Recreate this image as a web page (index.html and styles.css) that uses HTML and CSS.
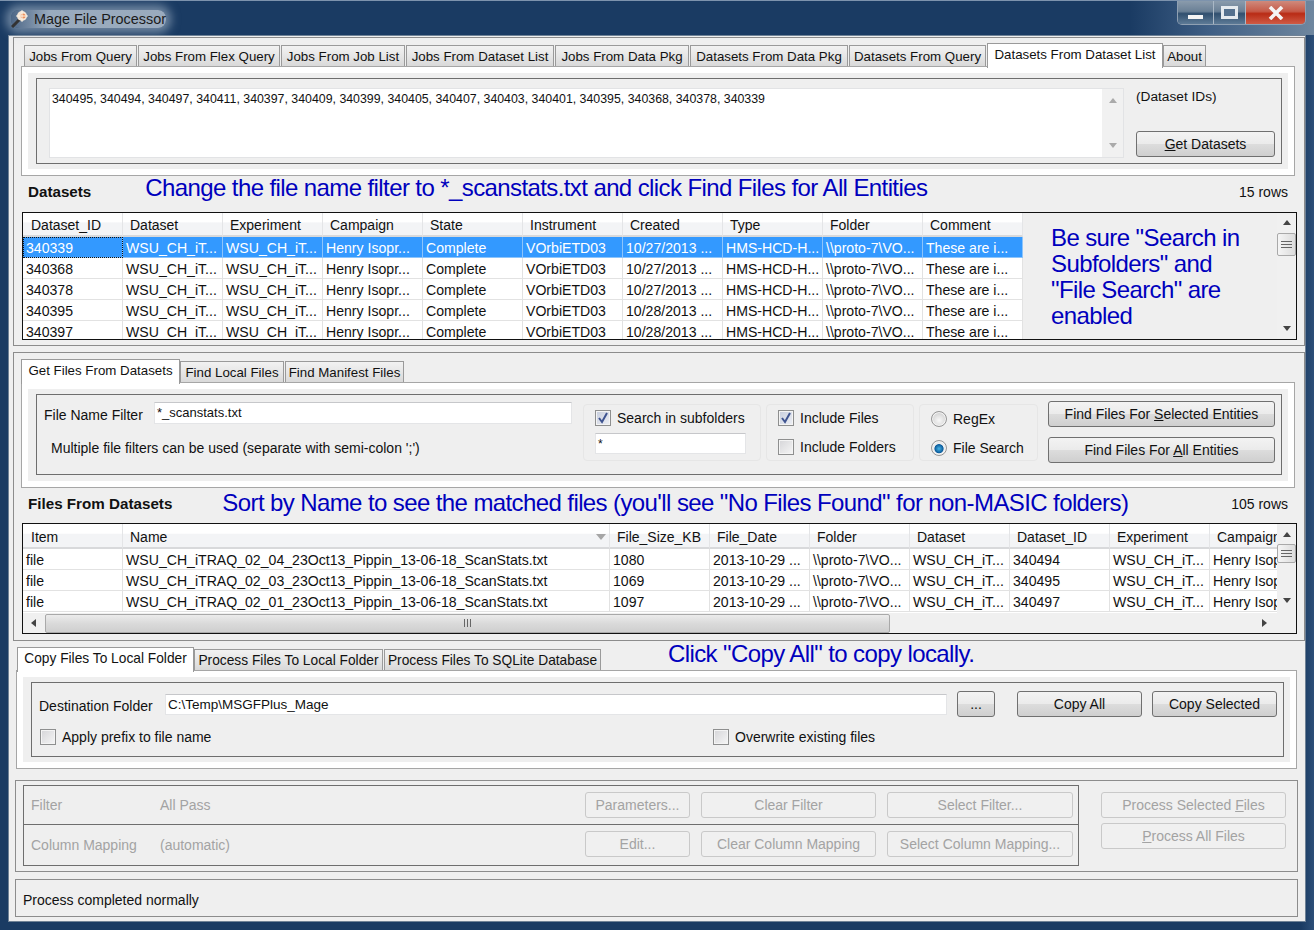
FILE: index.html
```html
<!DOCTYPE html>
<html lang="en">
<head>
    <meta charset="UTF-8">
    <title>Mage File Processor</title>
    <link rel="stylesheet" href="styles.css">
</head>
<body>
<div class="window">
    <div class="titlebar">
        <div class="title-glow">
            <svg class="app-icon" width="18" height="18" viewBox="0 0 18 18">
                <path d="M1 17 L9 9" stroke="#333" stroke-width="3"/>
                <circle cx="11" cy="6" r="5" fill="#f6e6d6"/>
                <circle cx="12" cy="6" r="2.5" fill="#ee8f5a"/>
                <path d="M11 0 V12 M5 6 H17" stroke="#fbf3e6" stroke-width="1"/>
            </svg>
            <span class="title-text">Mage File Processor</span>
        </div>
        <div class="window-controls">
            <div class="ctl ctl-min"><span class="min-bar"></span></div>
            <div class="ctl ctl-max"><span class="max-box"></span></div>
            <div class="ctl ctl-close">
                <svg width="16" height="14" viewBox="0 0 16 14"><path d="M2 1 L14 13 M14 1 L2 13" stroke="#f4f4f4" stroke-width="3.6"/></svg>
            </div>
        </div>
    </div>

    <div class="client">
        <!-- upper panel: dataset query -->
        <section class="panel panel-datasets">
            <div class="tabs tabs-query">
                <div class="tab">Jobs From Query</div>
                <div class="tab">Jobs From Flex Query</div>
                <div class="tab">Jobs From Job List</div>
                <div class="tab">Jobs From Dataset List</div>
                <div class="tab">Jobs From Data Pkg</div>
                <div class="tab">Datasets From Data Pkg</div>
                <div class="tab">Datasets From Query</div>
                <div class="tab active">Datasets From Dataset List</div>
                <div class="tab">About</div>
            </div>
            <div class="tab-page page-query">
                <div class="group group-query">
                    <div class="textbox">
                        <div class="textbox-text">340495, 340494, 340497, 340411, 340397, 340409, 340399, 340405, 340407, 340403, 340401, 340395, 340368, 340378, 340339</div>
                        <div class="textbox-scroll"><span class="arrow up pale"></span><span class="arrow down pale"></span></div>
                    </div>
                    <div class="query-side">
                        <span class="ids-label">(Dataset IDs)</span>
                        <button class="btn btn-get"><u>G</u>et Datasets</button>
                    </div>
                </div>
            </div>
            <div class="heading-row">
                <span class="heading">Datasets</span>
                <span class="note note-datasets">Change the file name filter to *_scanstats.txt and click Find Files for All Entities</span>
                <span class="count">15 rows</span>
            </div>
            <div class="grid-frame frame-datasets">
                <div class="grid-clip clip-datasets">
                    <table class="grid">
                        <thead>
                            <tr><th>Dataset_ID</th><th>Dataset</th><th>Experiment</th><th>Campaign</th><th>State</th><th>Instrument</th><th>Created</th><th>Type</th><th>Folder</th><th>Comment</th></tr>
                        </thead>
                        <tbody>
                            <tr class="selected"><td class="focused">340339</td><td>WSU_CH_iT...</td><td>WSU_CH_iT...</td><td>Henry Isopr...</td><td>Complete</td><td>VOrbiETD03</td><td>10/27/2013 ...</td><td>HMS-HCD-H...</td><td>\\proto-7\VO...</td><td>These are i...</td></tr>
                            <tr><td>340368</td><td>WSU_CH_iT...</td><td>WSU_CH_iT...</td><td>Henry Isopr...</td><td>Complete</td><td>VOrbiETD03</td><td>10/27/2013 ...</td><td>HMS-HCD-H...</td><td>\\proto-7\VO...</td><td>These are i...</td></tr>
                            <tr><td>340378</td><td>WSU_CH_iT...</td><td>WSU_CH_iT...</td><td>Henry Isopr...</td><td>Complete</td><td>VOrbiETD03</td><td>10/27/2013 ...</td><td>HMS-HCD-H...</td><td>\\proto-7\VO...</td><td>These are i...</td></tr>
                            <tr><td>340395</td><td>WSU_CH_iT...</td><td>WSU_CH_iT...</td><td>Henry Isopr...</td><td>Complete</td><td>VOrbiETD03</td><td>10/28/2013 ...</td><td>HMS-HCD-H...</td><td>\\proto-7\VO...</td><td>These are i...</td></tr>
                            <tr><td>340397</td><td>WSU_CH_iT...</td><td>WSU_CH_iT...</td><td>Henry Isopr...</td><td>Complete</td><td>VOrbiETD03</td><td>10/28/2013 ...</td><td>HMS-HCD-H...</td><td>\\proto-7\VO...</td><td>These are i...</td></tr>
                        </tbody>
                    </table>
                </div>
                <div class="side-note">Be sure "Search in Subfolders" and "File Search" are enabled</div>
                <div class="vscroll vscroll-datasets">
                    <span class="arrow up"></span>
                    <span class="thumb"><i></i><i></i><i></i></span>
                    <span class="arrow down"></span>
                </div>
            </div>
        </section>

        <!-- middle panel: find files -->
        <section class="panel panel-files">
            <div class="tabs tabs-find">
                <div class="tab active">Get Files From Datasets</div>
                <div class="tab">Find Local Files</div>
                <div class="tab">Find Manifest Files</div>
            </div>
            <div class="tab-page page-find">
                <div class="group group-find">
                    <div class="filter-col">
                        <div class="filter-row">
                            <label class="filter-label">File Name Filter</label>
                            <div class="input input-filter">*_scanstats.txt</div>
                        </div>
                        <div class="filter-hint">Multiple file filters can be used (separate with semi-colon ';')</div>
                    </div>
                    <div class="opt-box opt-sub">
                        <div class="check-row"><span class="check on"><svg width="12" height="12" viewBox="0 0 12 12"><path d="M2 6 L5 10 L10 1" fill="none" stroke="#3f5490" stroke-width="2"/></svg></span>Search in subfolders</div>
                        <div class="input input-sub">*</div>
                    </div>
                    <div class="opt-box opt-include">
                        <div class="check-row"><span class="check on"><svg width="12" height="12" viewBox="0 0 12 12"><path d="M2 6 L5 10 L10 1" fill="none" stroke="#3f5490" stroke-width="2"/></svg></span>Include Files</div>
                        <div class="check-row"><span class="check"></span>Include Folders</div>
                    </div>
                    <div class="opt-box opt-mode">
                        <div class="check-row"><span class="radio"></span>RegEx</div>
                        <div class="check-row"><span class="radio on"></span>File Search</div>
                    </div>
                    <div class="find-buttons">
                        <button class="btn btn-find">Find Files For <u>S</u>elected Entities</button>
                        <button class="btn btn-find">Find Files For <u>A</u>ll Entities</button>
                    </div>
                </div>
            </div>
            <div class="heading-row heading-files">
                <span class="heading">Files From Datasets</span>
                <span class="note note-files">Sort by Name to see the matched files (you'll see "No Files Found" for non-MASIC folders)</span>
                <span class="count">105 rows</span>
            </div>
            <div class="grid-frame frame-files">
                <div class="files-top">
                    <div class="grid-clip clip-files">
                        <table class="grid grid-files">
                            <colgroup><col class="col-std"><col class="col-name"><col class="col-std"><col class="col-std"><col class="col-std"><col class="col-std"><col class="col-std"><col class="col-std"><col class="col-std"></colgroup>
                            <thead>
                                <tr><th>Item</th><th class="sorted">Name<span class="sort-mark"></span></th><th>File_Size_KB</th><th>File_Date</th><th>Folder</th><th>Dataset</th><th>Dataset_ID</th><th>Experiment</th><th>Campaign</th></tr>
                            </thead>
                            <tbody>
                                <tr><td>file</td><td>WSU_CH_iTRAQ_02_04_23Oct13_Pippin_13-06-18_ScanStats.txt</td><td>1080</td><td>2013-10-29 ...</td><td>\\proto-7\VO...</td><td>WSU_CH_iT...</td><td>340494</td><td>WSU_CH_iT...</td><td>Henry Isopr...</td></tr>
                                <tr><td>file</td><td>WSU_CH_iTRAQ_02_03_23Oct13_Pippin_13-06-18_ScanStats.txt</td><td>1069</td><td>2013-10-29 ...</td><td>\\proto-7\VO...</td><td>WSU_CH_iT...</td><td>340495</td><td>WSU_CH_iT...</td><td>Henry Isopr...</td></tr>
                                <tr><td>file</td><td>WSU_CH_iTRAQ_02_01_23Oct13_Pippin_13-06-18_ScanStats.txt</td><td>1097</td><td>2013-10-29 ...</td><td>\\proto-7\VO...</td><td>WSU_CH_iT...</td><td>340497</td><td>WSU_CH_iT...</td><td>Henry Isopr...</td></tr>
                            </tbody>
                        </table>
                    </div>
                    <div class="vscroll vscroll-files">
                        <span class="arrow up"></span>
                        <span class="thumb"><i></i><i></i><i></i></span>
                        <span class="arrow down"></span>
                    </div>
                </div>
                <div class="hscroll">
                    <span class="arrow left"></span>
                    <span class="hthumb"><i></i><i></i><i></i></span>
                    <span class="arrow right"></span>
                </div>
            </div>
        </section>

        <!-- copy / process tabs -->
        <section class="copy-section">
            <div class="tabs tabs-copy">
                <div class="tab active">Copy Files To Local Folder</div>
                <div class="tab">Process Files To Local Folder</div>
                <div class="tab">Process Files To SQLite Database</div>
                <div class="note note-copy">Click "Copy All" to copy locally.</div>
            </div>
            <div class="tab-page page-copy">
                <div class="group group-copy">
                    <div class="dest-row">
                        <label class="dest-label">Destination Folder</label>
                        <div class="input input-dest">C:\Temp\MSGFPlus_Mage</div>
                        <button class="btn btn-browse">...</button>
                        <button class="btn btn-copy">Copy All</button>
                        <button class="btn btn-copy">Copy Selected</button>
                    </div>
                    <div class="copy-opts">
                        <div class="check-row check-prefix"><span class="check"></span>Apply prefix to file name</div>
                        <div class="check-row"><span class="check"></span>Overwrite existing files</div>
                    </div>
                </div>
            </div>
        </section>

        <!-- disabled pipeline controls -->
        <section class="process-box">
            <div class="filter-table">
                <div class="filter-line">
                    <span class="dim-name">Filter</span>
                    <span class="dim-value">All Pass</span>
                    <button class="btn off btn-small">Parameters...</button>
                    <button class="btn off btn-mid">Clear Filter</button>
                    <button class="btn off btn-wide">Select Filter...</button>
                </div>
                <div class="filter-line line-mapping">
                    <span class="dim-name">Column Mapping</span>
                    <span class="dim-value">(automatic)</span>
                    <button class="btn off btn-small">Edit...</button>
                    <button class="btn off btn-mid">Clear Column Mapping</button>
                    <button class="btn off btn-wide">Select Column Mapping...</button>
                </div>
            </div>
            <div class="process-buttons">
                <button class="btn off btn-process">Process Selected <u>F</u>iles</button>
                <button class="btn off btn-process"><u>P</u>rocess All Files</button>
            </div>
        </section>

        <div class="status-box">Process completed normally</div>
    </div>
</div>
</body>
</html>
```

FILE: styles.css
```css
* {
    box-sizing: border-box;
}

body {
    margin: 0;
    font-family: "Liberation Sans", Arial, sans-serif;
    font-size: 14px;
    color: #111;
    background-color: #1a3b63;
}

.window {
    width: 1314px;
    height: 930px;
    overflow: hidden;
    background: linear-gradient(90deg, #1a3b63 99%, #2d4f78);
    border-top: 1px solid #7d93ad;
}

/* title bar */
.titlebar {
    display: flex;
    align-items: center;
    height: 34px;
    padding-left: 11px;
    background: linear-gradient(90deg, #1a3b63 86%, #3f5f85 92%, #6f879f 100%);
}

.title-glow {
    display: flex;
    align-items: center;
    gap: 5px;
    margin-top: 2px;
    background: linear-gradient(90deg, rgba(120, 140, 165, 0.55), rgba(196, 208, 220, 0.75) 25%);
    box-shadow: 0 0 10px 5px rgba(170, 186, 204, 0.6);
    border-radius: 8px;
}

.app-icon {
    flex: none;
}

.title-text {
    font-size: 14.4px;
    color: #1a1a1a;
    line-height: 16px;
}

.window-controls {
    display: flex;
    align-self: flex-start;
    margin-left: auto;
    margin-right: 8px;
    height: 24px;
    border: 1px solid #8fa0b2;
    border-top: none;
    border-radius: 0 0 5px 5px;
    overflow: hidden;
}

.ctl {
    display: flex;
    align-items: center;
    justify-content: center;
    background: linear-gradient(#8a9bac, #6a8096 45%, #31506f 55%, #5d7a96);
    border-right: 1px solid #aab8c6;
}

.ctl-min {
    width: 36px;
}

.ctl-max {
    width: 32px;
}

.ctl-close {
    width: 59px;
    border-right: none;
    background: linear-gradient(#cf8a7c, #c65a48 45%, #b92c16 55%, #cf5a44);
}

.min-bar {
    width: 15px;
    height: 4px;
    margin-top: 9px;
    background-color: #f4f4f4;
}

.max-box {
    width: 17px;
    height: 13px;
    border: 3px solid #e4e9ee;
    background-color: #54708e;
}

/* client area */
.client {
    width: 1298px;
    height: 887px;
    margin-left: 8px;
    background-color: #efefef;
    border: 1px solid #6f8296;
    padding: 1px 0 0 4px;
}

.panel {
    width: 1292px;
    border: 1px solid #8c8c8c;
}

.panel-datasets {
    height: 309px;
}

.panel-files {
    height: 289px;
    margin-top: 6px;
}

/* tabs */
.tabs {
    display: grid;
    grid-template-rows: 23px;
    align-items: end;
    height: 23px;
    font-size: 13.3px;
}

.tabs-query {
    grid-template-columns: 114px 143px 125px 149px 135px 159px 138px 176px 44px;
    margin: 5px 0 0 10px;
}

.tabs-find {
    grid-template-columns: 159px 105px 120px;
    margin: 6px 0 0 7px;
}

.tabs-copy {
    grid-template-columns: 177px 190px 218px 1fr;
    margin: 6px 0 0 4px;
    font-size: 13.75px;
}

.tab {
    height: 21px;
    line-height: 21px;
    text-align: center;
    white-space: nowrap;
    background: linear-gradient(#f2f2f2, #e6e6e6 50%, #d9d9d9);
    border: 1px solid #9a9a9a;
    border-bottom: none;
    margin-right: 1px;
}

.tab.active {
    position: relative;
    height: 25px;
    margin: 0 0 -2px;
    line-height: 21px;
    background: #fff;
    z-index: 1;
}

.tab-page {
    border: 1px solid #a6a6a6;
    background-color: #efefef;
    box-shadow: inset 0 0 0 6px #fff;
    padding: 11px 0 0 14px;
}

.page-query {
    width: 1274px;
    height: 110px;
    margin-left: 7px;
}

.page-find {
    width: 1274px;
    height: 106px;
    margin-left: 7px;
}

.page-copy {
    width: 1281px;
    height: 99px;
    margin-left: 3px;
}

.group {
    border: 1px solid #6e6e6e;
}

/* query group */
.group-query {
    display: flex;
    width: 1246px;
    height: 86px;
    padding: 9px 6px 6px 12px;
}

.textbox {
    display: flex;
    width: 1076px;
    height: 70px;
    background-color: #fff;
    border: 1px solid #e2e3e5;
}

.textbox-text {
    flex: 1;
    padding: 3px 0 0 2px;
    font-size: 12.35px;
    white-space: nowrap;
}

.textbox-scroll {
    display: flex;
    flex-direction: column;
    justify-content: space-between;
    align-items: center;
    width: 21px;
    padding: 9px 0 9px;
    background-color: #f1f1f1;
}

.query-side {
    display: flex;
    flex-direction: column;
    justify-content: space-between;
    margin-left: 12px;
}

.ids-label {
    font-size: 13.7px;
    margin-top: 1px;
}

/* buttons */
.btn {
    font-family: inherit;
    font-size: 14px;
    color: #111;
    height: 26px;
    padding: 0;
    white-space: nowrap;
    background: linear-gradient(#f3f3f3, #ebebeb 48%, #dcdcdc 52%, #cfcfcf);
    border: 1px solid #707070;
    border-radius: 3px;
}

.btn.off {
    color: #a3a3a3;
    background: #f0f0f0;
    border-color: #c9c9c9;
}

.btn-get {
    width: 139px;
}

/* heading rows above grids */
.heading-row {
    display: flex;
    align-items: center;
    height: 36px;
    padding: 0 16px 0 14px;
}

.heading-files {
    height: 35px;
}

.heading {
    font-weight: bold;
    font-size: 15.2px;
    white-space: nowrap;
    margin-top: -5px;
}

.heading-files .heading {
    margin-top: -4px;
}

.note {
    color: #0000bd;
    font-size: 24px;
    letter-spacing: -0.6px;
    white-space: nowrap;
}

.note-datasets {
    margin-left: 54px;
    margin-top: -13px;
}

.note-files {
    margin-left: 50px;
    margin-top: -5px;
}

.note-copy {
    align-self: start;
    height: 23px;
    line-height: 23px;
    margin: -5px 0 0 66px;
}

.count {
    margin-left: auto;
    margin-top: -5px;
    font-size: 14px;
}

.heading-files .count {
    margin-top: -4px;
}

/* grids */
.grid-frame {
    width: 1275px;
    margin-left: 8px;
    border: 1px solid #111;
}

.frame-datasets {
    display: flex;
    height: 128px;
}

.frame-files {
    height: 111px;
}

.grid-clip {
    overflow: hidden;
    background-color: #fff;
}

.clip-datasets {
    flex: none;
    width: 1000px;
}

.clip-files {
    flex: 1;
}

.grid {
    width: 1000px;
    table-layout: fixed;
    border-collapse: separate;
    border-spacing: 0;
    font-size: 14.1px;
}

.grid-files {
    width: 1287px;
}

.col-std {
    width: 100px;
}

.col-name {
    width: 487px;
}

.grid th {
    height: 24px;
    padding: 2px 0 0 7px;
    font-weight: normal;
    font-size: 14px;
    text-align: left;
    white-space: nowrap;
    overflow: hidden;
    background: linear-gradient(#fff 40%, #f3f4f6 45%, #f3f4f6);
    border-right: 1px solid #e4e5e7;
    border-bottom: 2px solid #d8d9db;
}

.grid th:first-child {
    padding-left: 8px;
}

.grid-files th {
    height: 25px;
}

.grid td {
    height: 21px;
    padding: 2px 0 0 3px;
    white-space: nowrap;
    overflow: hidden;
    border-right: 1px solid #e2e2e2;
    border-bottom: 1px solid #e2e2e2;
}

.selected td {
    color: #fff;
    background-color: #3399ff;
    border-color: #8cc4fb;
}

.grid td.focused {
    outline: 1px dotted #111;
    outline-offset: -1px;
}

.sorted {
    position: relative;
}

.sort-mark {
    position: absolute;
    right: 3px;
    top: 10px;
    border-left: 5px solid transparent;
    border-right: 5px solid transparent;
    border-top: 6px solid #a6a6a6;
}

.side-note {
    flex: 1;
    padding: 12px 20px 0 28px;
    color: #0000bd;
    font-size: 24px;
    letter-spacing: -0.6px;
    line-height: 26px;
}

/* scrollbars */
.vscroll {
    display: flex;
    flex-direction: column;
    align-items: center;
    flex: none;
    width: 19px;
    background-color: #f0f0f0;
}

.vscroll-datasets {
    height: 126px;
    padding: 7px 0 8px;
    margin-left: auto;
}

.vscroll-files {
    height: 89px;
    padding: 8px 0 10px;
}

.thumb {
    display: flex;
    flex-direction: column;
    justify-content: center;
    align-items: center;
    gap: 2px;
    width: 19px;
    height: 23px;
    margin-top: 8px;
    margin-bottom: auto;
    background: linear-gradient(90deg, #f5f5f5, #dcdcdc);
    border: 1px solid #a9a9a9;
    border-radius: 2px;
}

.vscroll-files .thumb {
    height: 19px;
    margin-top: 7px;
}

.thumb i {
    width: 11px;
    height: 1px;
    background-color: #666;
}

.arrow {
    flex: none;
    width: 0;
    height: 0;
    border: 4px solid transparent;
}

.arrow.up {
    border-top: none;
    border-bottom: 5px solid #444;
}

.arrow.down {
    border-bottom: none;
    border-top: 5px solid #444;
}

.arrow.left {
    border-left: none;
    border-right: 5px solid #444;
}

.arrow.right {
    border-right: none;
    border-left: 5px solid #444;
}

.arrow.pale {
    border-top-color: transparent;
    border-bottom-color: #aaa;
}

.arrow.down.pale {
    border-top-color: #aaa;
    border-bottom-color: transparent;
}

.files-top {
    display: flex;
    height: 89px;
}

.hscroll {
    display: flex;
    align-items: center;
    height: 20px;
    padding: 0 29px 0 8px;
    background-color: #f0f0f0;
}

.hthumb {
    display: flex;
    align-items: center;
    justify-content: center;
    gap: 2px;
    width: 845px;
    height: 19px;
    margin-left: 9px;
    margin-right: auto;
    background: linear-gradient(#ececec, #dadada 50%, #cfcfcf);
    border: 1px solid #a9a9a9;
    border-radius: 2px;
}

.hthumb i {
    width: 1px;
    height: 8px;
    background-color: #666;
}

/* find files group */
.group-find {
    display: flex;
    width: 1246px;
    height: 81px;
    padding: 6px 0 0 7px;
}

.filter-col {
    width: 539px;
    margin-top: 1px;
}

.filter-row {
    display: flex;
    align-items: center;
}

.filter-label {
    width: 110px;
    margin-top: 4px;
}

.input {
    height: 22px;
    line-height: 20px;
    padding-left: 2px;
    font-size: 13px;
    white-space: nowrap;
    background-color: #fff;
    border: 1px solid #e4e5e7;
    border-top-color: #c6c7ca;
}

.input-filter {
    width: 418px;
}

.filter-hint {
    margin: 16px 0 0 7px;
}

.opt-box {
    display: flex;
    flex-direction: column;
    justify-content: space-between;
    height: 57px;
    margin-top: 3px;
    margin-right: 5px;
    border: 1px solid #e6e6e6;
    border-radius: 4px;
    padding: 4px 0 5px 11px;
}

.opt-sub {
    width: 178px;
    padding-bottom: 6px;
}

.opt-include {
    width: 148px;
}

.opt-mode {
    width: 119px;
    margin-right: 10px;
    padding-bottom: 4px;
}

.check-row {
    display: flex;
    align-items: center;
    gap: 6px;
    height: 17px;
    white-space: nowrap;
}

.check {
    display: flex;
    align-items: center;
    justify-content: center;
    flex: none;
    width: 16px;
    height: 16px;
    border: 1px solid #8e8f8f;
    background: linear-gradient(135deg, #d5d5d8, #f6f6f6);
    box-shadow: inset 0 0 0 1px #f4f4f4;
}

.check.on {
    background: linear-gradient(135deg, #c6cddd, #eef0f5);
}

.radio {
    flex: none;
    width: 16px;
    height: 16px;
    border: 1px solid #979797;
    border-radius: 50%;
    background: radial-gradient(circle at 50% 60%, #f8f8f8, #d4d4d4 70%, #c0c0c0);
    box-shadow: inset 0 0 0 1px #f4f4f4;
}

.radio.on {
    background: radial-gradient(circle at 50% 55%, #45b4e6 0, #0c5c9c 40%, #f0f0f0 48%, #d0d0d0);
}

.opt-mode .check-row {
    margin-top: 1px;
}

.input-sub {
    width: 151px;
    height: 21px;
    font-size: 12px;
}

.find-buttons {
    display: flex;
    flex-direction: column;
    gap: 10px;
}

.btn-find {
    width: 227px;
}

/* copy group */
.group-copy {
    width: 1253px;
    height: 75px;
    padding: 8px 0 0 7px;
}

.dest-row {
    display: flex;
    align-items: center;
}

.dest-label {
    width: 126px;
    margin-top: 4px;
    white-space: nowrap;
}

.input-dest {
    width: 782px;
    height: 21px;
    font-size: 13.5px;
    line-height: 19px;
}

.btn-browse {
    width: 38px;
    margin-left: 10px;
}

.btn-copy {
    width: 125px;
    margin-left: 10px;
}

.btn-browse + .btn-copy {
    margin-left: 22px;
}

.copy-opts {
    display: flex;
    margin-top: 11px;
}

.check-prefix {
    width: 673px;
    margin-left: 1px;
}

/* disabled process box */
.process-box {
    display: flex;
    width: 1283px;
    height: 92px;
    margin: 11px 0 0 2px;
    padding: 4px 0 0 7px;
    border: 1px solid #8c8c8c;
}

.filter-table {
    width: 1056px;
    height: 81px;
    border: 1px solid #6e6e6e;
}

.filter-line {
    display: flex;
    align-items: center;
    height: 38px;
    padding: 0 5px 0 7px;
    color: #a3a3a3;
}

.line-mapping {
    height: 41px;
    padding-bottom: 3px;
    border-top: 1px solid #6e6e6e;
}

.line-mapping .dim-name,
.line-mapping .dim-value {
    margin-top: 3px;
}

.dim-name {
    width: 129px;
    white-space: nowrap;
}

.dim-value {
    width: 425px;
    white-space: nowrap;
}

.btn-small {
    width: 105px;
}

.btn-mid {
    width: 175px;
    margin-left: 11px;
}

.btn-wide {
    width: 186px;
    margin-left: 11px;
}

.process-buttons {
    display: flex;
    flex-direction: column;
    gap: 5px;
    margin: 7px 0 0 22px;
}

.btn-process {
    width: 185px;
}

.status-box {
    width: 1283px;
    height: 38px;
    margin: 7px 0 0 2px;
    padding: 12px 0 0 7px;
    border: 1px solid #8c8c8c;
}
```
